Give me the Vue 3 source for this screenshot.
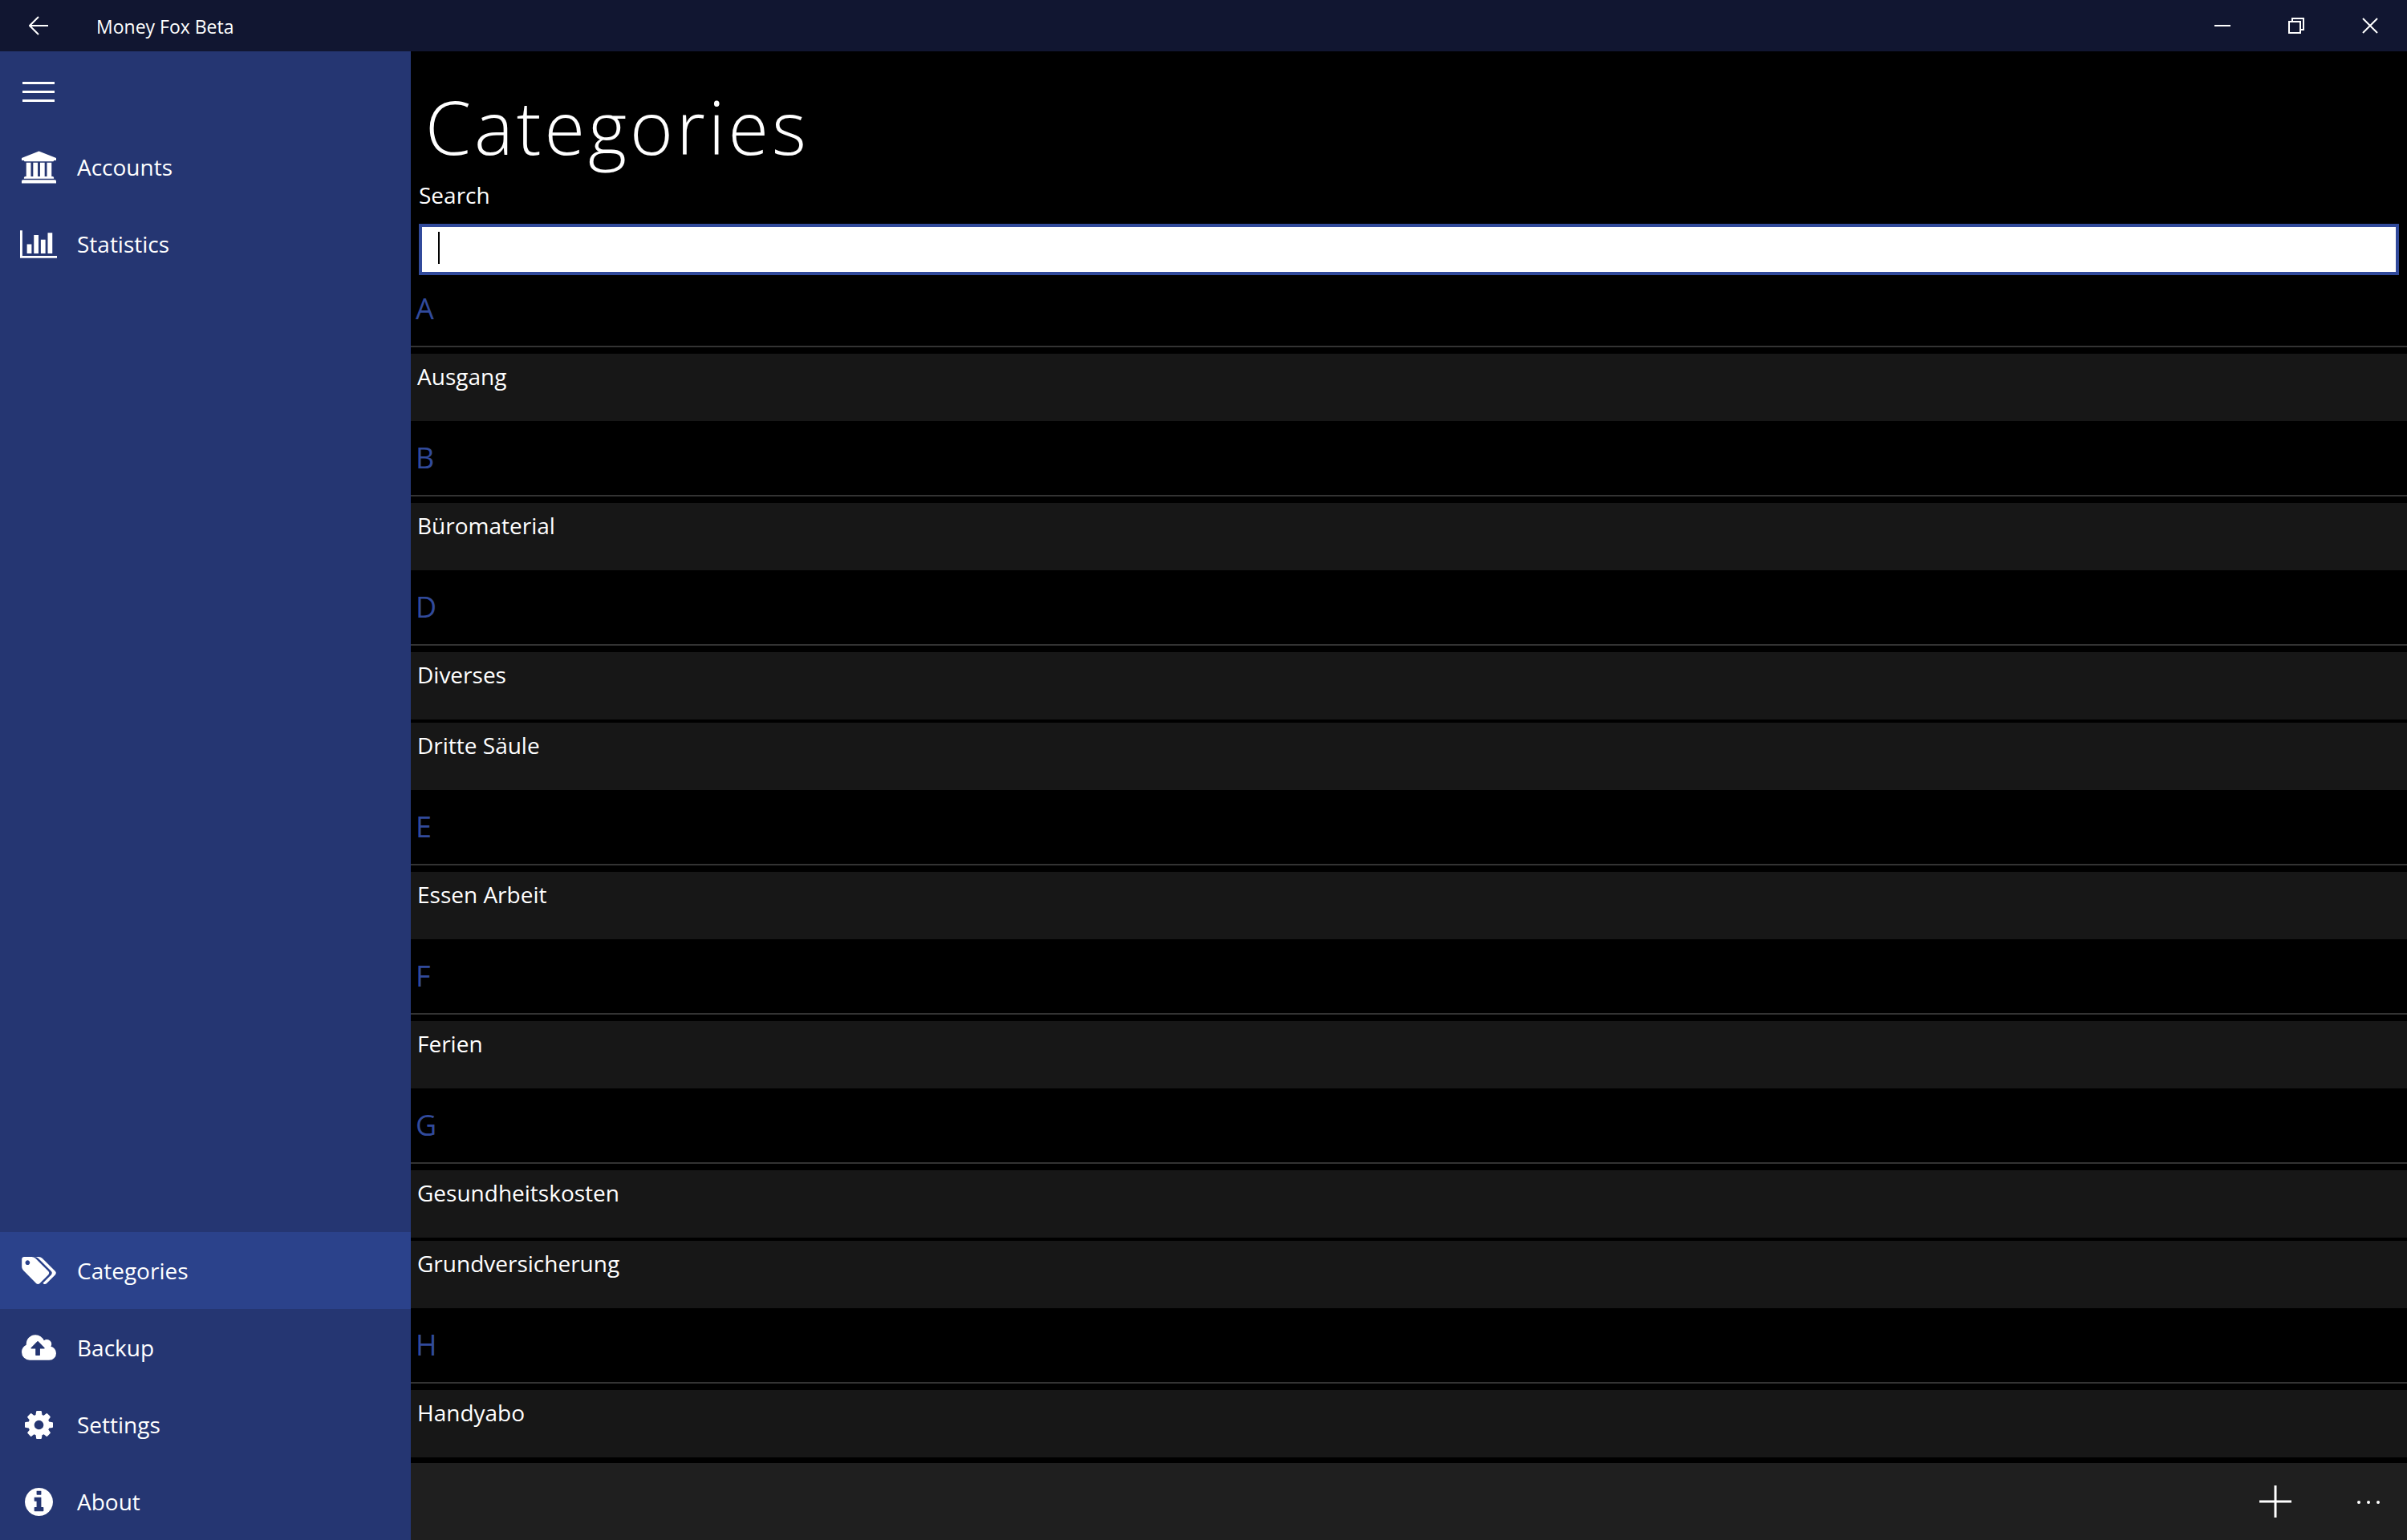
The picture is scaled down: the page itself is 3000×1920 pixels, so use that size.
<script setup>
import { ref, computed } from 'vue'

const search = ref('')

const mainNav = [
  {
    label: 'Accounts',
    viewBox: '-128 0 1920 1792',
    width: 43,
    height: 41,
    path: 'M832 0l960 384v128h-128q0 26-20.5 45t-48.5 19h-1526q-28 0-48.5-19t-20.5-45h-128v-128zm-704 640h256v768h128v-768h256v768h128v-768h256v768h128v-768h256v768h59q28 0 48.5 19t20.5 45v64h-1664v-64q0-26 20.5-45t48.5-19h59v-768zm1595 960q28 0 48.5 19t20.5 45v128h-1920v-128q0-26 20.5-45t48.5-19h1782z',
  },
  {
    label: 'Statistics',
    viewBox: '0 128 2048 1536',
    width: 46,
    height: 35,
    path: 'M640 896v512h-256v-512h256zm384-512v1024h-256v-1024h256zm1024 1152v128h-2048v-1536h128v1408h1920zm-640-896v768h-256v-768h256zm384-384v1152h-256v-1152h256z',
  },
]

const footerNav = [
  {
    label: 'Categories',
    active: true,
    viewBox: '-64 128 1899 1515',
    width: 43,
    height: 34,
    path: 'M384 448q0-53-37.5-90.5t-90.5-37.5-90.5 37.5-37.5 90.5 37.5 90.5 90.5 37.5 90.5-37.5 37.5-90.5zm1067 576q0 53-37 90l-491 492q-39 37-91 37-53 0-90-37l-715-716q-38-37-64.5-101t-26.5-117v-416q0-52 38-90t90-38h416q53 0 117 26.5t102 64.5l715 714q37 39 37 91zm384 0q0 53-37 90l-491 492q-39 37-91 37-36 0-59-14t-53-45l470-470q37-37 37-90 0-52-37-91l-715-714q-38-38-102-64.5t-117-26.5h224q53 0 117 26.5t102 64.5l715 714q37 39 37 91z',
  },
  {
    label: 'Backup',
    viewBox: '-64 128 1920 1408',
    width: 43,
    height: 32,
    path: 'M1216 864q0-14-9-23l-352-352q-9-9-23-9t-23 9l-351 351q-10 12-10 24 0 14 9 23t23 9h224v352q0 13 9.5 22.5t22.5 9.5h192q13 0 22.5-9.5t9.5-22.5v-352h224q13 0 22.5-9.5t9.5-22.5zm640 288q0 159-112.5 271.5t-271.5 112.5h-1088q-185 0-316.5-131.5t-131.5-316.5q0-130 70-240t188-165q-2-30-2-43 0-212 150-362t362-150q156 0 285.5 87t188.5 231q71-62 166-62 106 0 181 75t75 181q0 76-41 138 130 31 213.5 135.5t83.5 238.5z',
  },
  {
    label: 'Settings',
    viewBox: '128 128 1536 1536',
    width: 35,
    height: 35,
    path: 'M1152 896q0-106-75-181t-181-75-181 75-75 181 75 181 181 75 181-75 75-181zm512-109v222q0 12-8 23t-20 13l-185 28q-19 54-39 91 35 50 107 138 10 12 10 25t-9 23q-27 37-99 108t-94 71q-12 0-26-9l-138-108q-44 23-91 38-16 136-29 186-7 28-36 28h-222q-14 0-24.5-8.5t-11.5-21.5l-28-184q-49-16-90-37l-141 107q-10 9-25 9-14 0-25-11-126-114-165-168-7-10-7-23 0-12 8-23 15-21 51-66.5t54-70.5q-27-50-41-99l-183-27q-13-2-21-12.5t-8-23.5v-222q0-12 8-23t19-13l186-28q14-46 39-92-40-57-107-138-10-12-10-24 0-10 9-23 26-36 98.5-107.5t94.5-71.5q13 0 26 10l138 107q44-23 91-38 16-136 29-186 7-28 36-28h222q14 0 24.5 8.5t11.5 21.5l28 184q49 16 90 37l142-107q9-9 24-9 13 0 25 10 129 119 165 170 7 8 7 22 0 12-8 23-15 21-51 66.5t-54 70.5q26 50 41 98l183 28q13 2 21 12.5t8 23.5z',
  },
  {
    label: 'About',
    viewBox: '128 128 1536 1536',
    width: 35,
    height: 35,
    path: 'M1152 1376v-160q0-14-9-23t-23-9h-96v-512q0-14-9-23t-23-9h-320q-14 0-23 9t-9 23v160q0 14 9 23t23 9h96v320h-96q-14 0-23 9t-9 23v160q0 14 9 23t23 9h448q14 0 23-9t9-23zm-128-896v-160q0-14-9-23t-23-9h-192q-14 0-23 9t-9 23v160q0 14 9 23t23 9h192q14 0 23-9t9-23zm640 416q0 209-103 385.5t-279.5 279.5-385.5 103-385.5-103-279.5-279.5-103-385.5 103-385.5 279.5-279.5 385.5-103 385.5 103 279.5 279.5 103 385.5z',
  },
]

const navGroups = [mainNav, footerNav]

const categories = [
  'Ausgang',
  'Büromaterial',
  'Diverses',
  'Dritte Säule',
  'Essen Arbeit',
  'Ferien',
  'Gesundheitskosten',
  'Grundversicherung',
  'Handyabo',
]

const groups = computed(() => {
  const byLetter = new Map()
  for (const name of categories) {
    if (!name.toLowerCase().includes(search.value.toLowerCase())) continue
    const letter = name[0]
    if (!byLetter.has(letter)) byLetter.set(letter, [])
    byLetter.get(letter).push(name)
  }
  return [...byLetter].map(([letter, names]) => ({ letter, names }))
})
</script>

<template>
  <div class="app">
    <header class="titlebar">
      <button class="back" type="button" aria-label="Back">
        <svg width="24" height="24" viewBox="0 0 24 24" fill="none" stroke="currentColor" stroke-width="2">
          <path d="M24 12H1M12 1L1 12l11 11" />
        </svg>
      </button>
      <span class="app-name">Money Fox Beta</span>
      <div class="window-controls">
        <button type="button" aria-label="Minimize">
          <svg width="20" height="20" viewBox="0 0 20 20" stroke="currentColor" stroke-width="2">
            <path d="M0 10h20" />
          </svg>
        </button>
        <button type="button" aria-label="Restore">
          <svg width="20" height="20" viewBox="0 0 20 20" fill="none" stroke="currentColor" stroke-width="2">
            <path d="M1 5h14v14H1zM5 5V1h14v14h-4" />
          </svg>
        </button>
        <button type="button" aria-label="Close">
          <svg width="20" height="20" viewBox="0 0 20 20" stroke="currentColor" stroke-width="2">
            <path d="M1 1l18 18M19 1L1 19" />
          </svg>
        </button>
      </div>
    </header>

    <aside class="sidebar">
      <button class="menu" type="button" aria-label="Menu">
        <svg width="40" height="30" viewBox="0 0 40 30" stroke="currentColor" stroke-width="3">
          <path d="M0 6.500h40M0 17.500h40M0 28.500h40" />
        </svg>
      </button>
      <nav class="nav">
        <ul v-for="(group, index) in navGroups" :key="index" class="nav-group">
          <li v-for="entry in group" :key="entry.label">
            <a href="#" class="nav-link" :class="{ active: entry.active }">
              <span class="nav-icon">
                <svg :width="entry.width" :height="entry.height" :viewBox="entry.viewBox" fill="currentColor" aria-hidden="true">
                  <path :d="entry.path" />
                </svg>
              </span>
              <span>{{ entry.label }}</span>
            </a>
          </li>
        </ul>
      </nav>
    </aside>

    <main class="page">
      <div class="page-head">
        <h1>Categories</h1>
        <label for="search">Search</label>
        <div class="search-box">
          <input id="search" v-model="search" type="text" autocomplete="off" />
          <span v-if="!search" class="caret"></span>
        </div>
      </div>

      <div class="list">
        <section v-for="group in groups" :key="group.letter">
          <h2>{{ group.letter }}</h2>
          <ul class="items">
            <li v-for="name in group.names" :key="name">{{ name }}</li>
          </ul>
        </section>
      </div>

      <footer class="commands">
        <button class="add" type="button" aria-label="Add category">
          <svg width="40" height="40" viewBox="0 0 40 40" stroke="currentColor" stroke-width="3">
            <path d="M0 20h40M20 0v40" />
          </svg>
        </button>
        <button class="more" type="button" aria-label="More">
          <svg width="28" height="6" viewBox="0 0 28 6" fill="currentColor">
            <circle cx="2" cy="4" r="2" />
            <circle cx="14" cy="4" r="2" />
            <circle cx="26" cy="4" r="2" />
          </svg>
        </button>
      </footer>
    </main>
  </div>
</template>

<style>
body {
  background: #000;
}
</style>

<style scoped>
.app {
  display: grid;
  grid-template: auto 1fr / 512px 1fr;
  min-height: 100vh;
  background: #000;
  color: #fff;
  font: 28px/40px "Open Sans", "Noto Sans", sans-serif;
}

button {
  display: flex;
  align-items: center;
  justify-content: center;
  padding: 0;
  border: 0;
  background: none;
  color: inherit;
}

ul {
  margin: 0;
  padding: 0;
  list-style: none;
}

.titlebar {
  grid-column: 1 / -1;
  display: flex;
  height: 64px;
  background: #111631;
}

.back {
  width: 96px;
}

.app-name {
  flex: 1;
  padding-left: 24px;
  font-size: 23px;
  line-height: 66px;
}

.window-controls {
  display: flex;
}

.window-controls button {
  width: 92px;
}

.sidebar {
  display: flex;
  flex-direction: column;
  background: #253672;
}

.menu {
  width: 96px;
  height: 96px;
}

.nav {
  flex: 1;
  display: flex;
  flex-direction: column;
  justify-content: space-between;
}

.nav-link {
  display: flex;
  align-items: center;
  height: 96px;
  color: inherit;
  text-decoration: none;
}

.nav-link.active {
  background: #2b428b;
}

.nav-icon {
  display: flex;
  justify-content: center;
  width: 96px;
}

.page {
  display: flex;
  flex-direction: column;
}

.page-head {
  padding: 36px 10px 0;
}

h1 {
  margin: 0;
  padding-left: 8px;
  font-size: 92px;
  font-weight: 300;
  letter-spacing: 4px;
  line-height: 116px;
}

label {
  display: block;
  padding: 7px 0 16px;
}

.search-box {
  position: relative;
  display: flex;
}

.search-box input {
  flex: 1;
  box-sizing: border-box;
  height: 64px;
  padding: 0 16px;
  border: 4px solid #314a9b;
  border-radius: 0;
  outline: 0;
  background: #fff;
  color: #000;
  font: inherit;
}

.caret {
  position: absolute;
  top: 10px;
  left: 24px;
  width: 2px;
  height: 40px;
  background: #000;
}

.list {
  flex: 1;
}

h2 {
  margin: 0;
  padding: 0 6px 4px;
  border-bottom: 2px solid #333;
  color: #314a9b;
  font-size: 36px;
  font-weight: 400;
  line-height: 84px;
}

.items {
  padding-top: 8px;
}

.items li {
  box-sizing: border-box;
  height: 84px;
  margin-bottom: 4px;
  padding: 8px;
  background: #171717;
}

.commands {
  display: flex;
  justify-content: flex-end;
  height: 96px;
  background: #1f1f1f;
}

.add {
  width: 136px;
}

.more {
  width: 96px;
}
</style>
